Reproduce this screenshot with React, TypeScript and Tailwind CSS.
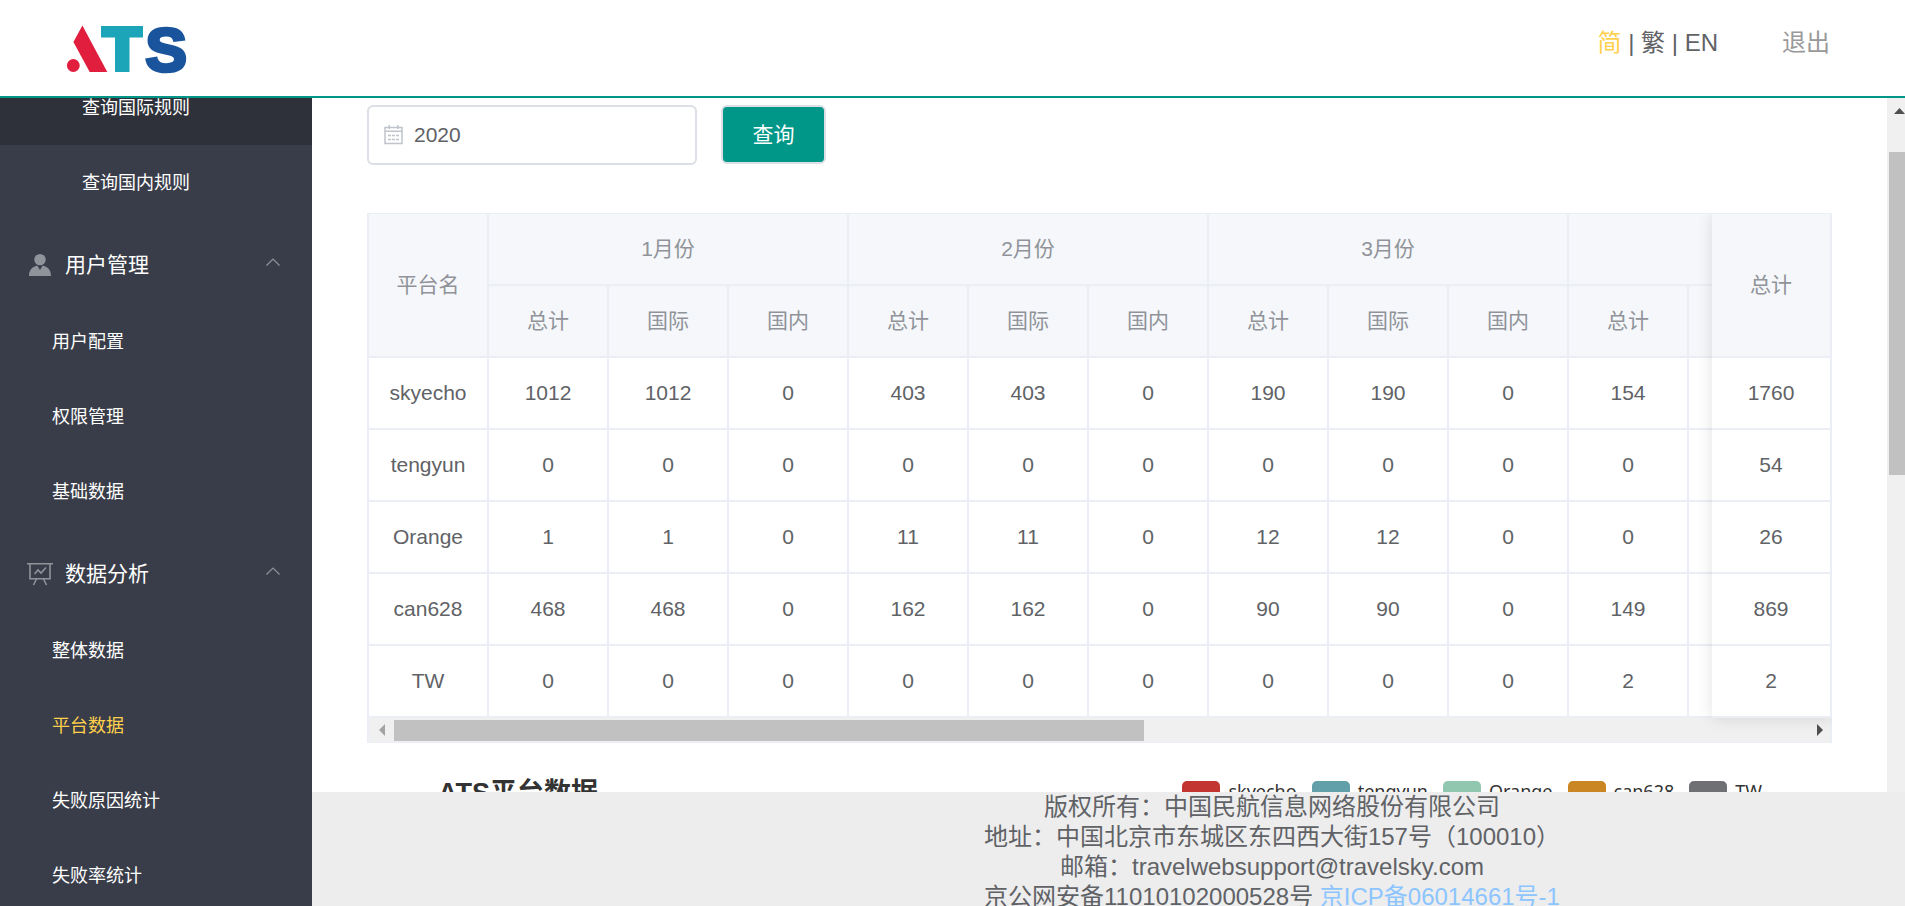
import React from "react";

const months = ["1月份", "2月份", "3月份"];

const rows: { name: string; values: number[]; total: number }[] = [
  { name: "skyecho", values: [1012, 1012, 0, 403, 403, 0, 190, 190, 0, 154], total: 1760 },
  { name: "tengyun", values: [0, 0, 0, 0, 0, 0, 0, 0, 0, 0], total: 54 },
  { name: "Orange", values: [1, 1, 0, 11, 11, 0, 12, 12, 0, 0], total: 26 },
  { name: "can628", values: [468, 468, 0, 162, 162, 0, 90, 90, 0, 149], total: 869 },
  { name: "TW", values: [0, 0, 0, 0, 0, 0, 0, 0, 0, 2], total: 2 },
];

const legend = [
  { name: "skyecho", color: "bg-[#c23531]" },
  { name: "tengyun", color: "bg-[#61a0a8]" },
  { name: "Orange", color: "bg-[#91c7ae]" },
  { name: "can628", color: "bg-[#ca8622]" },
  { name: "TW", color: "bg-[#6e7074]" },
];

function Logo() {
  return (
    <svg width="124" height="50" viewBox="66 24 124 50" role="img" aria-label="ATS">
      <path d="M82.4 25.5 73.4 42 89.7 72h17.6z" fill="#e21e3f" />
      <circle cx="73.3" cy="65.5" r="6.4" fill="#e21e3f" />
      <path d="M101 26h42v11.5h-13.5V72H115V37.500h-14z" fill="#1ca5b8" />
      <text
        x="145.500"
        y="71"
        fontSize="62"
        fontWeight="700"
        fontFamily="Liberation Sans, sans-serif"
        fill="#19549c"
        stroke="#19549c"
        strokeWidth="3.500"
      >
        S
      </text>
    </svg>
  );
}

function UserIcon() {
  return (
    <svg width="26" height="24" viewBox="27 253 26 24" fill="#909399" aria-hidden="true">
      <circle cx="40" cy="259.600" r="5.700" />
      <path d="M29 276c0-5.500 2.500-9 8.300-10.500L40 270l2.700-4.500C48.500 267 51 270.500 51 276z" />
    </svg>
  );
}

function BoardIcon() {
  return (
    <svg width="26" height="24" viewBox="27 563 26 24" fill="none" stroke="#909399" strokeWidth="1.600" aria-hidden="true">
      <path d="M27 564.700h26M30 565v14.800h20V565M36.500 580l-3 6M43.500 580l3 6M34.500 575l3.500-4 3 3 5-5.500" />
    </svg>
  );
}

function CalendarIcon() {
  return (
    <svg width="19" height="20" viewBox="0 0 19 20" fill="none" stroke="#c0c4cc" strokeWidth="1.500" aria-hidden="true">
      <path d="M1 2.500h17v16H1zM1 6.200h17M5.200 0v4M13.800 0v4" />
      <path d="M4 10.500h11M4 14.500h11" strokeDasharray="3 1" />
    </svg>
  );
}

function SubItem({ label, deep, active, hovered }: { label: string; deep?: boolean; active?: boolean; hovered?: boolean }) {
  return (
    <a
      href="#"
      className={`flex h-[75px] items-center text-lg ${deep ? "pl-[82px]" : "pl-[52px]"} ${
        active ? "text-[#ffd04b]" : "text-white"
      } ${hovered ? "bg-[#2e3139]" : ""}`}
    >
      {label}
    </a>
  );
}

function Group({ label, icon }: { label: string; icon: React.ReactNode }) {
  return (
    <button type="button" className="flex h-[84px] w-full items-center pt-1.5 pr-8 pl-[27px] text-[21px] text-white">
      {icon}
      <span className="ml-3 flex-1 text-left">{label}</span>
      <svg className="mb-1.5" width="14" height="14" viewBox="0 0 14 14" fill="none" stroke="#909399" strokeWidth="1.200" aria-hidden="true">
        <path d="M0.500 10.500 7 4l6.500 6.500" />
      </svg>
    </button>
  );
}

const headCell = "h-[72px] border-r-2 border-b-2 border-[#ebeef5] bg-[#f5f7fa] p-0 text-center font-normal text-[#909399]";
const bodyCell = "h-[72px] border-r-2 border-b-2 border-[#ebeef5] bg-white p-0 text-center";
const fixed = "sticky right-0 z-10";

function DataTable() {
  return (
    <div className="relative mt-12 overflow-hidden border-t border-b border-l-2 border-[#ebeef5]">
      <div className="overflow-hidden">
        <table className="w-[1680px] table-fixed border-separate border-spacing-0 text-[21px] text-[#606266]">
          <thead>
            <tr>
              <th rowSpan={2} className={headCell}>平台名</th>
              {months.map((m) => (
                <th key={m} colSpan={3} className={headCell}>{m}</th>
              ))}
              <th colSpan={3} className={headCell} />
              <th rowSpan={2} className={`${headCell} ${fixed}`}>总计</th>
            </tr>
            <tr>
              {months.map((m) => (
                <React.Fragment key={m}>
                  <th className={headCell}>总计</th>
                  <th className={headCell}>国际</th>
                  <th className={headCell}>国内</th>
                </React.Fragment>
              ))}
              <th className={headCell}>总计</th>
              <th className={headCell} />
              <th className={headCell} />
            </tr>
          </thead>
          <tbody>
            {rows.map((r) => (
              <tr key={r.name}>
                <td className={bodyCell}>{r.name}</td>
                {r.values.map((v, i) => (
                  <td key={i} className={bodyCell}>{v}</td>
                ))}
                <td className={bodyCell} />
                <td className={bodyCell} />
                <td className={`${bodyCell} ${fixed}`}>{r.total}</td>
              </tr>
            ))}
          </tbody>
        </table>
      </div>
      <div className="flex h-6 items-center border-r-2 border-[#ebeef5] bg-[#f0f0f0]">
        <button type="button" aria-label="向左滚动" className="flex w-[25px] shrink-0 justify-center">
          <svg width="6" height="12" viewBox="0 0 6 12" fill="#a3a3a3"><path d="M6 0v12L0 6z" /></svg>
        </button>
        <div className="flex-1">
          <div className="h-[21px] w-[53%] bg-[#c1c1c1]" />
        </div>
        <button type="button" aria-label="向右滚动" className="flex w-5 shrink-0 justify-center">
          <svg width="6" height="12" viewBox="0 0 6 12" fill="#505050"><path d="M0 0v12l6-6z" /></svg>
        </button>
      </div>
      <div className="pointer-events-none absolute top-0 right-0 bottom-6 w-[120px] shadow-[0_0_15px_rgba(0,0,0,0.12)]" />
    </div>
  );
}

export default function App() {
  return (
    <div className="flex h-screen flex-col overflow-hidden bg-white font-['Liberation_Sans','Noto_Sans_CJK_SC',sans-serif]">
      <header className="flex h-[98px] shrink-0 items-center justify-between border-b-2 border-[#009688] pt-0.5 pr-[75px] pl-[66px]">
        <Logo />
        <div className="flex items-center gap-16 pb-3 text-2xl text-[#606266]">
          <div>
            <a href="#" className="text-[#ffd04b]">简</a> | <a href="#">繁</a> | <a href="#">EN</a>
          </div>
          <a href="#" className="text-[#999999]">退出</a>
        </div>
      </header>

      <div className="flex min-h-0 flex-1">
        <aside className="w-[312px] shrink-0 overflow-hidden bg-[#393d49]">
          <nav className="-mt-7">
            <SubItem label="查询国际规则" deep hovered />
            <SubItem label="查询国内规则" deep />
            <Group label="用户管理" icon={<UserIcon />} />
            <SubItem label="用户配置" />
            <SubItem label="权限管理" />
            <SubItem label="基础数据" />
            <Group label="数据分析" icon={<BoardIcon />} />
            <SubItem label="整体数据" />
            <SubItem label="平台数据" active />
            <SubItem label="失败原因统计" />
            <SubItem label="失败率统计" />
          </nav>
        </aside>

        <div className="flex min-w-0 flex-1 flex-col">
          <div className="flex min-h-0 flex-1">
            <main className="min-w-0 flex-1 overflow-hidden px-[55px] pt-[7px]">
              <form className="flex gap-6" onSubmit={(e) => e.preventDefault()}>
                <label className="relative block w-[330px]">
                  <span className="absolute top-5 left-[17px]"><CalendarIcon /></span>
                  <input
                    type="text"
                    aria-label="年份"
                    defaultValue="2020"
                    className="h-[60px] w-full rounded-md border-2 border-[#dcdfe6] pl-[45px] text-[21px] text-[#606266]"
                  />
                </label>
                <button type="submit" className="h-[59px] w-[105px] rounded-md border-2 border-[#dcdfe6] bg-[#009688] text-[21px] text-white">
                  查询
                </button>
              </form>

              <DataTable />

              <section className="mt-7 flex h-10 items-center justify-between pr-[70px] pl-[71px] text-[#333333]">
                <h2 className="pt-1 text-[27px] font-bold whitespace-nowrap">ATS平台数据</h2>
                <ul className="flex gap-[15px] font-['Noto_Sans','Noto_Sans_CJK_SC',sans-serif] text-lg leading-6">
                  {legend.map((l) => (
                    <li key={l.name} className="flex items-center gap-2">
                      <span className={`h-[21px] w-[38px] rounded-[5px] ${l.color}`} />
                      {l.name}
                    </li>
                  ))}
                </ul>
              </section>
            </main>
            <div className="flex w-[18px] shrink-0 flex-col bg-[#f0f0f0] pl-0.5">
              <button type="button" aria-label="向上滚动" className="flex h-[54px] shrink-0 justify-end pt-2.5">
                <svg width="11" height="6" viewBox="0 0 11 6" fill="#505050"><path d="M0 6h11L5.500 0z" /></svg>
              </button>
              <div className="h-[323px] bg-[#c1c1c1]" />
            </div>
          </div>

          <footer className="h-[114px] shrink-0 overflow-hidden bg-[#ededed] pl-[327px] text-center text-2xl leading-[30px] text-[#606266]">
            <p>版权所有：中国民航信息网络股份有限公司</p>
            <p>地址：中国北京市东城区东四西大街157号（100010）</p>
            <p>邮箱：travelwebsupport@travelsky.com</p>
            <p>
              京公网安备11010102000528号 <a href="#" className="text-[#8cc5ff]">京ICP备06014661号-1</a>
            </p>
          </footer>
        </div>
      </div>
    </div>
  );
}
